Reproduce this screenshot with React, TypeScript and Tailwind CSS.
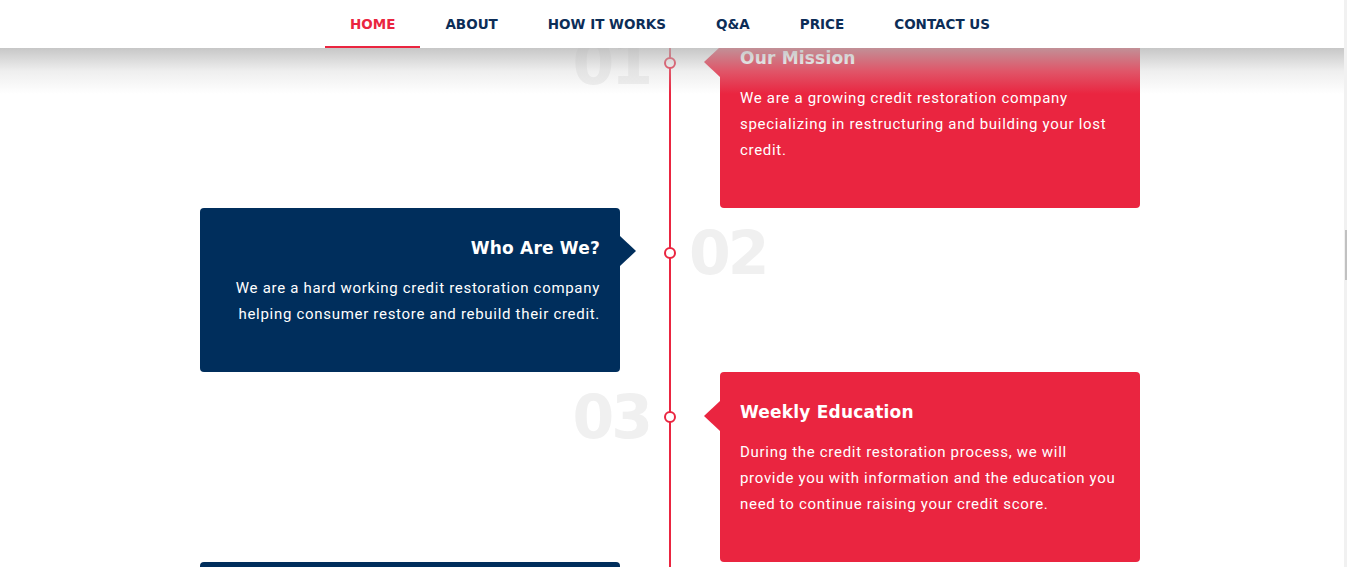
import React from 'react';

const navItems = ['HOME', 'ABOUT', 'HOW IT WORKS', 'Q&A', 'PRICE', 'CONTACT US'];

type Item = {
  num: string;
  title: string;
  lines: string[];
  side: 'left' | 'right';
  color: 'red' | 'navy';
};

const items: Item[] = [
  {
    num: '01',
    title: 'Our Mission',
    lines: [
      'We are a growing credit restoration company',
      'specializing in restructuring and building your lost',
      'credit.',
    ],
    side: 'right',
    color: 'red',
  },
  {
    num: '02',
    title: 'Who Are We?',
    lines: ['We are a hard working credit restoration company', 'helping consumer restore and rebuild their credit.'],
    side: 'left',
    color: 'navy',
  },
  {
    num: '03',
    title: 'Weekly Education',
    lines: [
      'During the credit restoration process, we will',
      'provide you with information and the education you',
      'need to continue raising your credit score.',
    ],
    side: 'right',
    color: 'red',
  },
  {
    num: '04',
    title: 'Fast Results',
    lines: ['We work with the bureaus and your creditors', 'to get the fastest results possible.'],
    side: 'left',
    color: 'navy',
  },
];

const heading = { fontFamily: '"DejaVu Sans", "Liberation Sans", sans-serif' };
const body = { fontFamily: 'Roboto, "Liberation Sans", sans-serif' };

function Card({ item }: { item: Item }) {
  const bg = item.color === 'red' ? 'bg-[#ea2540]' : 'bg-[#002e5c]';
  const isRight = item.side === 'right';
  return (
    <div className={`relative w-[420px] rounded-[4px] ${bg} px-5 pt-[21px] pb-[45px] text-white ${isRight ? 'text-left' : 'text-right'}`}>
      {isRight ? (
        <div className="absolute left-[-16px] top-[29px] h-0 w-0 border-y-[15px] border-r-[16px] border-y-transparent border-r-[#ea2540]" />
      ) : (
        <div className="absolute right-[-16px] top-[28px] h-0 w-0 border-y-[15px] border-l-[16px] border-y-transparent border-l-[#002e5c]" />
      )}
      <h3 style={heading} className="text-[17px] font-bold leading-[38px] tracking-[0.2px]">
        {item.title}
      </h3>
      <p style={body} className="mt-2 text-[15px] leading-[26px] tracking-[0.7px]">
        {item.lines.map((l) => (
          <span key={l} className="block whitespace-nowrap">
            {l}
          </span>
        ))}
      </p>
    </div>
  );
}

function Number({ num, align }: { num: string; align: 'left' | 'right' }) {
  return (
    <div className={`flex h-[90px] items-center ${align === 'right' ? 'justify-end pr-[19px]' : 'justify-start pl-[18px]'}`}>
      <span style={heading} className="text-[60px] font-bold leading-none tracking-[-3px] text-[#f0f0f0]">
        {num}
      </span>
    </div>
  );
}

function Row({ item }: { item: Item }) {
  return (
    <div className="flex">
      <div className="flex w-[469px] justify-start">
        {item.side === 'left' ? <Card item={item} /> : <div className="w-full"><Number num={item.num} align="right" /></div>}
      </div>
      <div className="relative w-[2px] bg-[#ea2540]">
        <div className="absolute left-[-5px] top-[39px] h-3 w-3 rounded-full border-2 border-[#ea2540] bg-white" />
      </div>
      <div className="flex w-[469px] justify-end">
        {item.side === 'right' ? <Card item={item} /> : <div className="w-full"><Number num={item.num} align="left" /></div>}
      </div>
    </div>
  );
}

function Header() {
  return (
    <div className="absolute left-0 top-0 w-[1344px]">
      <nav className="flex h-12 items-stretch justify-center bg-white pr-[4px]">
        {navItems.map((n, i) => (
          <a
            key={n}
            style={heading}
            className={`flex items-center px-[25px] pt-[3px] text-[13.5px] font-bold ${
              i === 0 ? 'border-b-2 border-[#ea2540] text-[#ea2540]' : 'border-b-2 border-transparent text-[#0c2d57]'
            }`}
          >
            {n}
          </a>
        ))}
      </nav>
      <div className="h-[46px] bg-gradient-to-b from-[rgba(180,180,180,0.75)] via-[rgba(200,200,200,0.3)] to-transparent" />
    </div>
  );
}

export default function App() {
  return (
    <div className="relative flex h-[567px] overflow-hidden bg-white">
      <div className="w-[1344px] shrink-0">
        <div className="flex flex-col pl-[200px]">
          <div className="flex h-[18px]">
            <div className="w-[469px]" />
            <div className="w-[2px] bg-[#ea2540]" />
          </div>
          {items.map((it) => (
            <Row key={it.num} item={it} />
          ))}
        </div>
      </div>
      <div className="flex w-[3px] flex-col bg-[#f1f1f1] pt-[230px]">
        <div className="ml-[1px] h-[50px] w-[2px] bg-[#c1c1c1]" />
      </div>
      <Header />
    </div>
  );
}
